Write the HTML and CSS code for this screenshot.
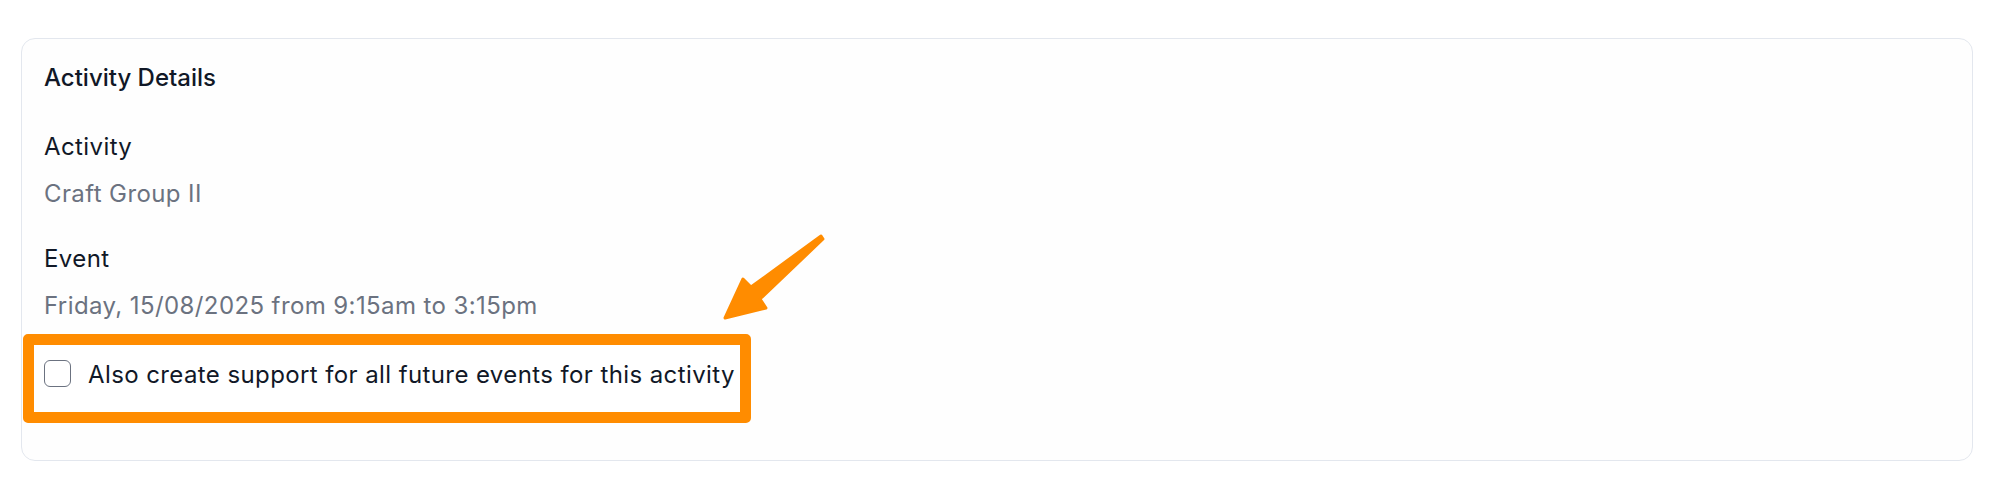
FILE: index.html
```html
<!DOCTYPE html>
<html lang="en">
<head>
<meta charset="utf-8">
<title>Activity Details</title>
<link rel="stylesheet" href="styles.css">
</head>
<body>
  <section class="card">
    <h2 class="card-title">Activity Details</h2>
    <div class="field">
      <div class="field-label">Activity</div>
      <div class="field-value">Craft Group II</div>
    </div>
    <div class="field field-last">
      <div class="field-label">Event</div>
      <div class="field-value">Friday, 15/08/2025 from 9:15am to 3:15pm</div>
    </div>
    <div class="highlight">
      <label class="check-row">
        <span class="checkbox"></span>
        <span class="check-text">Also create support for all future events for this activity</span>
      </label>
    </div>
  </section>
  <svg class="arrow" width="140" height="110" viewBox="0 0 140 110" aria-hidden="true">
    <polygon points="25,98 43,59 51,67 121,16 123,19 60,79 66,88" fill="#ff8c00" stroke="#ff8c00" stroke-width="3" stroke-linejoin="round"/>
  </svg>
</body>
</html>
```

FILE: styles.css
```css
* { box-sizing: border-box; }

html, body {
  margin: 0;
  background: #ffffff;
}

body {
  position: relative;
  padding: 38px 26px 0 21px;
  font-family: Inter, "Liberation Sans", sans-serif;
  font-size: 24px;
  line-height: 32px;
  letter-spacing: 0.4px;
  color: #111827;
}

.card {
  height: 423px;
  border: 1px solid #e3e7ee;
  border-radius: 14px;
  background: #fefefe;
  padding: 23px 22px 37px 22px;
}

.card-title {
  margin: 0 0 37px 0;
  font-size: 24px;
  line-height: 32px;
  font-weight: 500;
  letter-spacing: 0;
  color: #111827;
}

.field {
  display: flex;
  flex-direction: column;
  gap: 15px;
  margin-bottom: 33px;
}

.field-last {
  margin-bottom: 12px;
}

.field-label {
  color: #111827;
}

.field-value {
  color: #6b7280;
}

.highlight {
  width: 728px;
  margin-left: -21px;
  border: 11px solid #ff8c00;
  border-radius: 5px;
  padding: 14px 10px 21px 10px;
  background: #ffffff;
}

.check-row {
  display: flex;
  align-items: center;
  gap: 17px;
}

.checkbox {
  flex: none;
  width: 27px;
  height: 27px;
  margin-top: -4px;
  border: 1.5px solid #6b7280;
  border-radius: 6px;
  background: #ffffff;
}

.check-text {
  color: #111827;
  white-space: nowrap;
}

.arrow {
  position: absolute;
  left: 700px;
  top: 220px;
}
```
